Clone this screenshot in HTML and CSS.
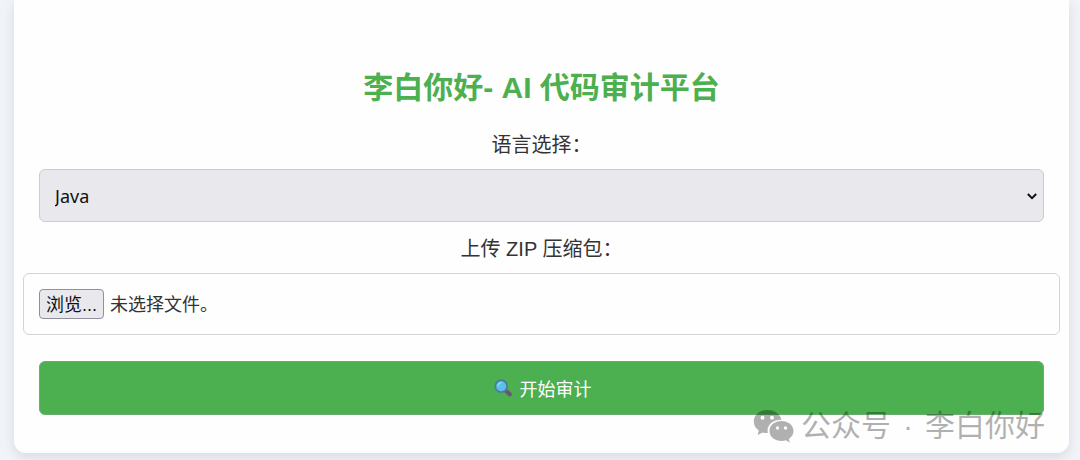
FILE: index.html
```html
<!DOCTYPE html>
<html lang="zh-CN">
<head>
<meta charset="utf-8">
<meta name="viewport" content="width=device-width, initial-scale=1">
<title>李白你好- AI 代码审计平台</title>
<link rel="stylesheet" href="styles.css">
</head>
<body>
<main class="card">
  <h1 class="title">李白你好- AI 代码审计平台</h1>
  <form class="form">
    <label class="label" for="language">语言选择：</label>
    <div class="select-wrap">
      <select class="select" id="language" name="language">
        <option>Java</option>
      </select>
      <svg class="chevron" viewBox="0 0 12 12" aria-hidden="true"><path d="M1.8 4 6 8.2 10.2 4" fill="none" stroke="#111" stroke-width="2"/></svg>
    </div>
    <label class="label" for="archive">上传 ZIP 压缩包：</label>
    <label class="file">
      <input class="file-input" type="file" id="archive" name="archive" accept=".zip">
      <span class="file-button">浏览...</span>
      <span class="file-name">未选择文件。</span>
    </label>
    <button class="submit" type="submit">
      <svg class="search" viewBox="0 0 20 20" aria-hidden="true">
        <path d="M12.5 12.5 17.500 17" stroke="#70507c" stroke-width="4.500" stroke-linecap="round"/>
        <circle cx="8" cy="8" r="6.6" fill="#5bbfe6" stroke="#4a7f9c" stroke-width="2"/>
        <path d="M4.5 7.5A4 4 0 0 1 8 4" fill="none" stroke="#8bdcf5" stroke-width="1.5" stroke-linecap="round"/>
      </svg>
      <span>开始审计</span>
    </button>
  </form>
  <div class="watermark">
    <svg class="wechat" viewBox="0 0 42 34" aria-hidden="true">
      <path d="M14.500 1C6.500 1 .8 6 .8 12.600c0 3.800 2 6.900 5 9L4.700 26l5-2.600c1.700.5 3.400.7 5.200.6C13 16.500 19.500 10.500 28.500 10.700 27 4.800 21.500 1 14.500 1Z"/>
      <path d="M28.500 12c-6.700 0-12 4.300-12 10s5.300 10 12 10c1.500 0 3-.2 4.300-.7l4 2.200-1-3.600c3-1.900 4.700-4.700 4.700-7.900 0-5.700-5.300-10-12-10Z"/>
      <g fill="#fff"><circle cx="9.500" cy="8.700" r="2"/><circle cx="19" cy="8.700" r="2"/><circle cx="24.500" cy="19" r="1.700"/><circle cx="32.500" cy="19" r="1.700"/></g>
    </svg>
    <span class="account"><span>公众号</span><span>·</span><span>李白你好</span></span>
  </div>
</main>
</body>
</html>
```
FILE: styles.css
```css
* {
  box-sizing: border-box;
}

body {
  margin: 0;
  padding: 0 11px 7px 14px;
  background: #f0f4f9;
  color: #333;
  font-family: "Liberation Sans", "Noto Sans CJK SC", sans-serif;
}

.card {
  position: relative;
  padding: 64px 25px 38px;
  background: #fefefe;
  border-radius: 0 0 12px 12px;
  box-shadow: 0 4px 12px rgba(0, 0, 0, 0.1);
}

.title {
  margin: 0 0 20px;
  color: #4caf50;
  font-size: 30px;
  line-height: 48px;
  text-align: center;
}

.form {
  display: flex;
  flex-direction: column;
}

.label {
  margin-bottom: 10px;
  font-size: 20px;
  line-height: 27px;
  text-align: center;
}

.select-wrap {
  position: relative;
  margin-bottom: 14px;
}

.select {
  display: block;
  width: 100%;
  height: 53px;
  padding: 0 15px;
  appearance: none;
  background: #e9e9ed;
  border: 1px solid #ccc;
  border-radius: 6px;
  color: #111;
  font-family: "Noto Sans", sans-serif;
  font-size: 18px;
}

.chevron {
  position: absolute;
  top: 21px;
  right: 6px;
  width: 12px;
  height: 12px;
  pointer-events: none;
}

.file {
  position: relative;
  display: flex;
  align-items: center;
  gap: 6px;
  margin: 0 -16px 26px;
  padding: 15px;
  border: 1px solid #d2d4d6;
  border-radius: 6px;
  font-size: 18px;
  line-height: 26px;
}

.file-input {
  position: absolute;
  inset: 0;
  width: 100%;
  opacity: 0;
}

.file-button {
  padding: 2px 6px 0;
  background: #e9e9ed;
  border: 1px solid #8f8f9d;
  border-radius: 4px;
  color: #111;
}

.file-name {
  padding-top: 2px;
}

.submit {
  display: flex;
  align-items: center;
  justify-content: center;
  gap: 8px;
  height: 54px;
  padding: 0 0 0 2px;
  background: #4caf50;
  border: 1px solid #6aad70;
  border-radius: 6px;
  color: #fff;
  font-family: inherit;
  font-size: 18px;
}

.search {
  width: 18px;
  height: 18px;
}

.watermark {
  position: absolute;
  right: 24px;
  bottom: 6px;
  display: flex;
  align-items: center;
  gap: 6px;
  opacity: 0.3;
  font-size: 30px;
  line-height: 42px;
  color: #000;
  pointer-events: none;
}

.account {
  display: flex;
  gap: 12px;
}

.wechat {
  width: 42px;
  height: 34px;
}
```
